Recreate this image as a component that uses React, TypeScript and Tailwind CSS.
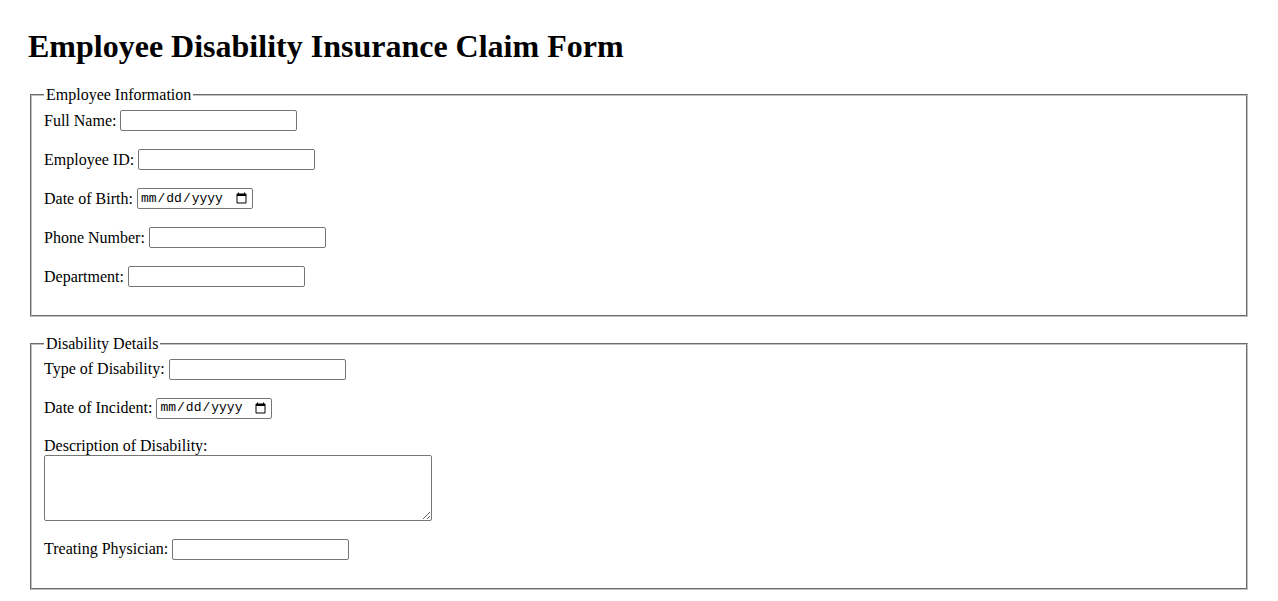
import type { ReactNode } from 'react';

const textInput = 'h-[21px] w-[177px] rounded-[2px] border border-[#767676] bg-white px-[2px] text-[13.33px]';
const dateInput =
  "h-[21px] w-[116px] rounded-[2px] border border-[#767676] bg-white px-[2px] text-[13px] font-['Liberation_Mono',monospace]";

function Row({ label, children }: { label: string; children: ReactNode }) {
  return (
    <div className="flex h-[21px] items-center gap-1">
      <label className="leading-[normal]">{label}</label>
      {children}
    </div>
  );
}

function Section({ title, children }: { title: string; children: ReactNode }) {
  return (
    <fieldset className="mx-[2px] border-2 border-[#c0c0c0] px-3 pt-[5.6px] pb-[10px] [border-style:groove]">
      <legend className="px-[2px] leading-[normal]">{title}</legend>
      <div className="flex flex-col gap-[18px] pb-[18px]">{children}</div>
    </fieldset>
  );
}

export default function App() {
  return (
    <div className="min-h-screen bg-white px-[28px] pt-[28px] pb-8 text-[16px] text-black font-['Liberation_Serif',serif]">
      <h1 className="mb-[21.44px] text-[32px] font-bold leading-[normal]">Employee Disability Insurance Claim Form</h1>
      <form>
        <Section title="Employee Information">
          <Row label="Full Name:">
            <input type="text" className={textInput} />
          </Row>
          <Row label="Employee ID:">
            <input type="text" className={textInput} />
          </Row>
          <Row label="Date of Birth:">
            <input type="date" className={dateInput} />
          </Row>
          <Row label="Phone Number:">
            <input type="tel" className={textInput} />
          </Row>
          <Row label="Department:">
            <input type="text" className={textInput} />
          </Row>
        </Section>

        <div className="mt-[18px]">
          <Section title="Disability Details">
            <Row label="Type of Disability:">
              <input type="text" className={textInput} />
            </Row>
            <Row label="Date of Incident:">
              <input type="date" className={dateInput} />
            </Row>
            <div className="flex flex-col items-start">
              <label className="h-[18px] leading-[normal]">Description of Disability:</label>
              <textarea className="h-[66px] w-[388px] rounded-[2px] border border-[#767676] bg-white px-[2px] text-[13px] font-['Liberation_Mono',monospace]" />
            </div>
            <Row label="Treating Physician:">
              <input type="text" className={textInput} />
            </Row>
          </Section>
        </div>
      </form>
    </div>
  );
}
